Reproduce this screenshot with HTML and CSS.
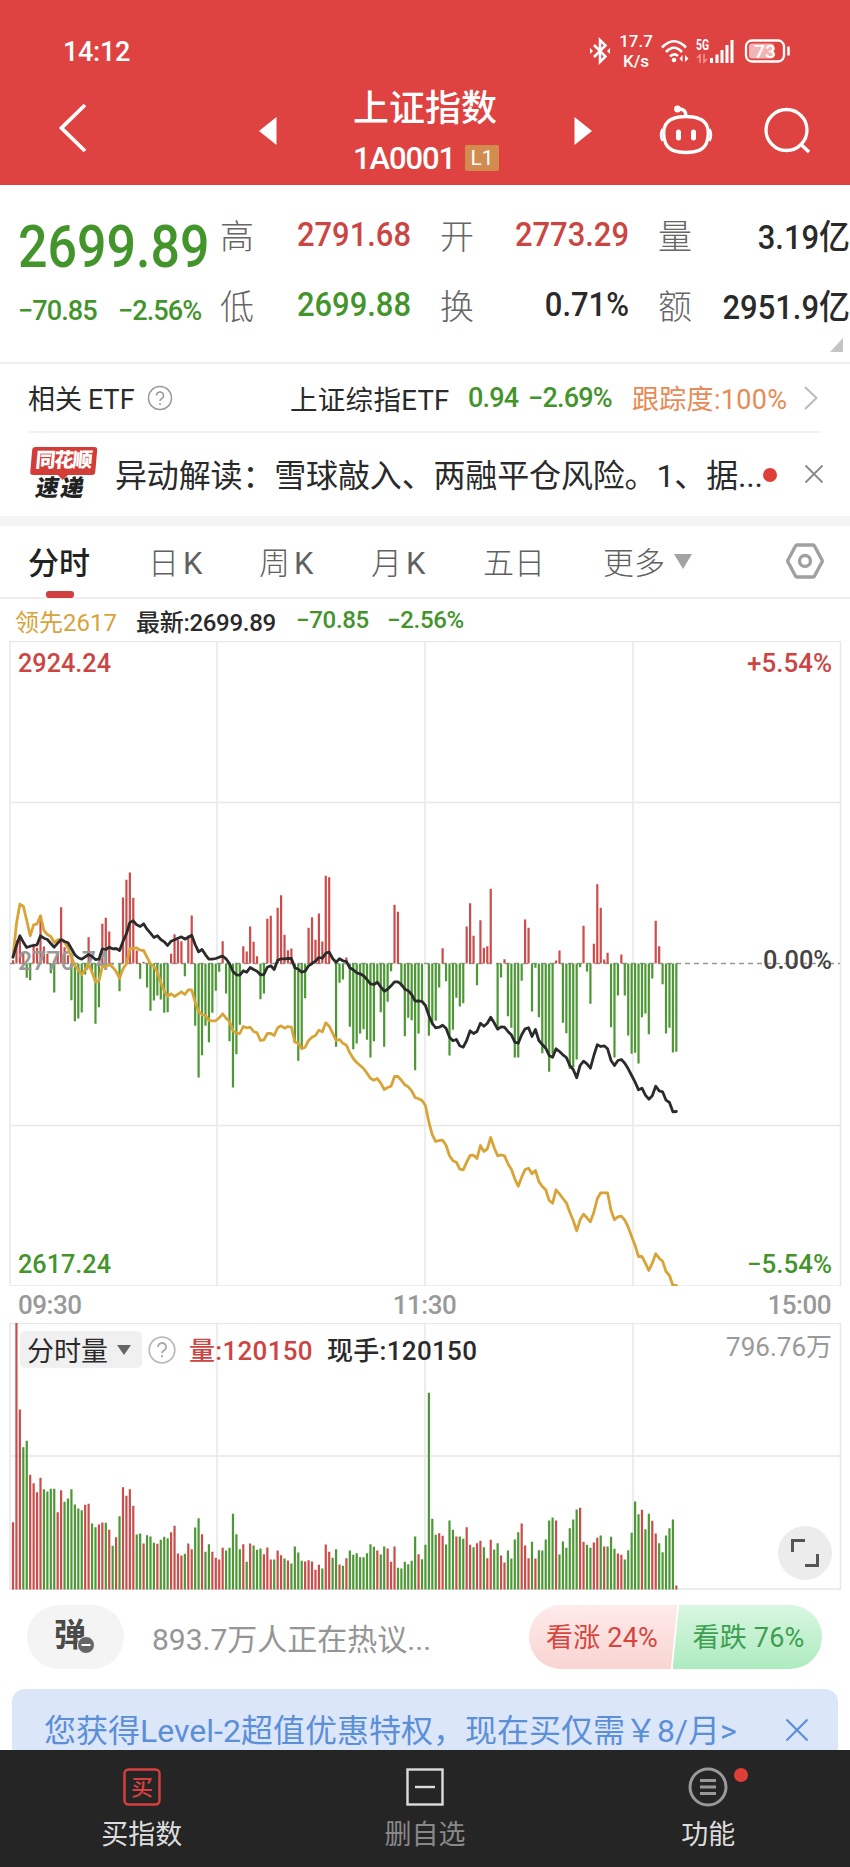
FILE: index.html
```html
<!DOCTYPE html>
<html lang="zh-CN">
<head>
<meta charset="utf-8">
<title>上证指数</title>
<link rel="stylesheet" href="styles.css">
</head>
<body>
<div class="phone">
  <header class="top">
    <div class="status">
      <span class="clock">14:12</span>
      <svg class="bt" width="22" height="28" viewBox="0 0 22 28"><path d="M5 8 16.500 19.500 11 25V3l5.500 5.500L5 20" fill="none" stroke="#fff" stroke-width="2.500"/><path d="M1 11l3 3-3 3zM21 11l-3 3 3 3z" fill="#fff"/></svg>
      <span class="speed">17.7<br>K/s</span>
      <svg width="30" height="26" viewBox="0 0 30 26"><g fill="none" stroke="#fff" stroke-width="2.600"><path d="M2 9.500Q14 -3 26 9.500M6 14Q14 5.500 22 14M10 18.500Q14 14.500 18 18"/></g><circle cx="14" cy="22" r="2.300" fill="#fff"/><path d="M22.500 17v7l-3-3.500zM25 17v7l3.500-3.500z" fill="#fff"/></svg>
      <svg class="signal" width="41" height="26" viewBox="0 0 41 26"><text x="1" y="12" class="fiveg" textLength="13" lengthAdjust="spacingAndGlyphs">5G</text><path d="M5 25v-8l-3 3M9 16v8l3-3" stroke="#f09a98" stroke-width="1.500" fill="none"/><path d="M16.500 20v5M22 16.500V25M27 12v13M32 7v18M37 2v23" stroke="#fff" stroke-width="3"/></svg>
      <svg class="battery" width="48" height="28" viewBox="0 0 48 28"><rect x="2" y="3.500" width="38" height="21" rx="6" fill="none" stroke="#fff" stroke-width="2.300"/><rect x="5" y="6.500" width="25" height="15" rx="3" fill="#f3b5b4"/><path d="M44.500 9.500v9" stroke="#fff" stroke-width="2.500"/><text x="10" y="20.500" class="charge" textLength="22" lengthAdjust="spacingAndGlyphs">73</text></svg>
    </div>
    <div class="navbar">
      <svg class="back" width="32" height="52" viewBox="0 0 32 52"><path d="M27 3 3.500 26 27 49" fill="none" stroke="#fff" stroke-width="3.800"/></svg>
      <svg class="prev" width="18" height="28" viewBox="0 0 18 28"><path d="M17.500 0v28L0 14z" fill="#fff"/></svg>
      <div class="title">
        <h1>上证指数</h1>
        <p><span>1A0001</span><b>L1</b></p>
      </div>
      <svg class="next" width="18" height="28" viewBox="0 0 18 28"><path d="M.5 0v28L18 14z" fill="#fff"/></svg>
      <svg class="robot" width="56" height="52" viewBox="0 0 56 52"><g fill="none" stroke="#fff" stroke-width="3.300"><path d="M28 12.500C18 12.500 10 15 7 22 5 26 5.500 34 7.500 39c3 7 10 9.500 20.500 9.500S45.500 46 48.500 39c2-5 2.500-13 .5-17-3-7-11-9.500-21-9.500z"/><path d="M28 12Q28 5 21 5" /><path d="M4.500 25Q1.500 31 4.500 37M51.500 25Q54.500 31 51.500 37" stroke-width="2.500"/></g><circle cx="19.500" cy="5" r="3.400" fill="#fff"/><path d="M20.500 28v6M35.500 28v6" stroke="#fff" stroke-width="5" stroke-linecap="round"/></svg>
      <svg class="search" width="50" height="50" viewBox="0 0 50 50"><circle cx="23.500" cy="24" r="20.500" fill="none" stroke="#fff" stroke-width="3.300"/><path d="M38 38.500l8 7.500" stroke="#fff" stroke-width="3.600"/></svg>
    </div>
  </header>

  <section class="quote">
    <div class="last down">
      <strong>2699.89</strong>
      <p><span>−70.85</span><span>−2.56%</span></p>
    </div>
    <dl class="stats">
      <dt>高</dt><dd class="up">2791.68</dd>
      <dt>开</dt><dd class="up">2773.29</dd>
      <dt>量</dt><dd>3.19亿</dd>
      <dt>低</dt><dd class="down">2699.88</dd>
      <dt>换</dt><dd>0.71%</dd>
      <dt>额</dt><dd>2951.9亿</dd>
    </dl>
    <svg class="corner" width="13" height="14" viewBox="0 0 13 14"><path d="M13 0v14H0z" fill="#c4c4c4"/></svg>
  </section>

  <section class="etf">
    <span>相关<i>ETF</i></span>
    <svg width="26" height="26" viewBox="0 0 26 26"><circle cx="13" cy="13" r="11.500" fill="none" stroke="#999" stroke-width="1.500"/><path d="M9.500 10.500a3.500 3.500 0 1 1 5 3.200q-1.500.8-1.500 2.300M13 18v2" fill="none" stroke="#999" stroke-width="1.500"/></svg>
    <span class="fund">上证综指ETF</span>
    <span class="down sq">0.94</span>
    <span class="down sq">−2.69%</span>
    <span class="track">跟踪度:100%</span>
    <svg width="16" height="26" viewBox="0 0 16 26"><path d="M2 2l11.500 11L2 24" fill="none" stroke="#bbb" stroke-width="2"/></svg>
  </section>

  <section class="news">
    <div class="brand"><b>同花顺</b><em>速递</em><svg width="10" height="5" viewBox="0 0 10 5"><path d="M0 0h10L5 5z" fill="#d23d38"/></svg></div>
    <p>异动解读：雪球敲入、两融平仓风险。1、据...</p>
    <i class="dot"></i>
    <svg width="20" height="20" viewBox="0 0 20 20"><path d="M1.500 1.500l17 17m0-17l-17 17" stroke="#888" stroke-width="1.800"/></svg>
  </section>

  <nav class="tabs">
    <span class="active">分时</span><span>日<i>K</i></span><span>周<i>K</i></span><span>月<i>K</i></span><span>五日</span><span>更多</span>
    <svg class="caret" width="18" height="15" viewBox="0 0 18 15"><path d="M0 0h18L9 15z" fill="#a3a3a3"/></svg>
    <svg class="gear" width="38" height="36" viewBox="0 0 38 36"><g fill="none" stroke="#a0a0a0" stroke-width="3.400"><path d="M11 2h16q1 0 1.500 1l7.500 14q.5 1 0 2l-7.500 14q-.5 1-1.500 1H11q-1 0-1.500-1L2 19q-.5-1 0-2L9.500 3q.5-1 1.500-1z"/><circle cx="19" cy="18" r="5.500"/></g></svg>
  </nav>

  <div class="legend">
    <span class="lead">领先2617</span><span>最新:2699.89</span><span class="down">−70.85</span><span class="down">−2.56%</span>
  </div>

  <svg class="chart" width="850" height="645" viewBox="0 0 850 645">
    <path class="grid" d="M10 .5H840.500V645H10zM10 161.500H840M10 484.500H840M217 0V645M425 0V645M633 0V645"/>
    <path class="zero" d="M10 322.500H840"/>
    <g id="spread"></g>
    <g class="labels">
      <text class="t-down" x="18" y="632" textLength="93" lengthAdjust="spacingAndGlyphs">2617.24</text>
      <text class="t-up" x="18" y="31" textLength="93" lengthAdjust="spacingAndGlyphs">2924.24</text>
      <text class="t-up" x="747" y="31" textLength="85" lengthAdjust="spacingAndGlyphs">+5.54%</text>
      <text class="t-down" x="747" y="632" textLength="85" lengthAdjust="spacingAndGlyphs">−5.54%</text>
      <text class="t-gray" x="18" y="329" textLength="92" lengthAdjust="spacingAndGlyphs">2770.74</text>
      <text class="t-dark" x="763" y="328" textLength="69" lengthAdjust="spacingAndGlyphs">0.00%</text>
    </g>
    <g id="lines"></g>
  </svg>

  <div class="hours"><span>09:30</span><span>11:30</span><span>15:00</span></div>

  <section class="volume">
    <svg class="chart" width="850" height="267" viewBox="0 0 850 267">
      <path class="grid" d="M10 .5H840.500V266H10zM10 133H840M217 0V266M425 0V266M633 0V266"/>
      <g id="volume"></g>
    </svg>
    <div class="tools">
      <span class="pick">分时量<svg width="14" height="10" viewBox="0 0 14 10"><path d="M0 0h14L7 10z" fill="#666"/></svg></span>
      <svg width="28" height="28" viewBox="0 0 28 28"><circle cx="14" cy="14" r="12.800" fill="none" stroke="#bbb" stroke-width="1.800"/><path d="M10 11a4 4 0 1 1 5.800 3.600q-1.800.9-1.800 2.700M14 19v2.200" fill="none" stroke="#aaa" stroke-width="1.800"/></svg>
      <span class="figure up">量:120150</span>
      <span class="figure">现手:120150</span>
      <span class="max">796.76万</span>
    </div>
    <button class="expand"><svg width="30" height="30" viewBox="0 0 30 30"><path d="M2.500 14V2.500H15M27.500 16v11.500H15" fill="none" stroke="#555" stroke-width="3"/></svg></button>
  </section>

  <section class="talk">
    <div class="danmu"><b>弹</b><svg width="18" height="18" viewBox="0 0 18 18"><circle cx="9" cy="9" r="8.500" fill="#666" stroke="#f4f4f4"/><path d="M4.500 9h9" stroke="#fff" stroke-width="2"/></svg></div>
    <span class="hint">893.7万人正在热议...</span>
    <div class="vote"><span class="bull">看涨 24%</span><span class="bear">看跌 76%</span></div>
  </section>

  <section class="promo">
    <span>您获得Level-2超值优惠特权，现在买仅需￥8/月&gt;</span>
    <svg width="24" height="24" viewBox="0 0 24 24"><path d="M1.500 1.500l21 21m0-21l-21 21" stroke="#5b8fd8" stroke-width="2.200"/></svg>
  </section>

  <footer class="bottom">
    <div><svg width="40" height="40" viewBox="0 0 40 40"><rect x="2.500" y="2.500" width="35" height="35" rx="4" fill="none" stroke="#d8403f" stroke-width="2.400"/><text x="20" y="28" class="buy">买</text></svg><span>买指数</span></div>
    <div class="muted"><svg width="40" height="40" viewBox="0 0 40 40"><rect x="2.500" y="2.500" width="35" height="35" fill="none" stroke="#ddd" stroke-width="2.400"/><path d="M10 20h20" stroke="#ddd" stroke-width="2.400"/></svg><span>删自选</span></div>
    <div><svg width="40" height="40" viewBox="0 0 40 40"><circle cx="20" cy="20" r="18" fill="none" stroke="#999" stroke-width="3"/><path d="M12 13.500h16M12 20h16M12 26.500h16" stroke="#999" stroke-width="2.800"/></svg><i class="dot"></i><span>功能</span></div>
  </footer>
</div>
<script src="chart.js"></script>
</body>
</html>
```
FILE: styles.css
```css
* { box-sizing: border-box; margin: 0; padding: 0; }
body { width: 850px; background: #fff; color: #2a2a2a; font-family: Roboto, "Noto Sans CJK SC", sans-serif; }
svg { display: block; flex: none; }
i { font-style: normal; }
.phone { width: 850px; height: 1867px; overflow: hidden; display: flex; flex-direction: column; white-space: nowrap; }
.phone > * { flex: none; }
.up { color: #cb4543; }
.down { color: #44942c; }
.dot { width: 14px; height: 14px; border-radius: 50%; background: #de3f38; }

.top { height: 185px; background: #de4341; color: #fff; }
.status { height: 78px; padding-top: 22px; display: grid; grid-template-columns: 526px 30px 41px 35px 49px 50px; align-items: center; padding-left: 63px; }
.clock { font-size: 27px; line-height: 56px; font-weight: 500; letter-spacing: -.3px; padding-top: 2px; }
.speed { font-size: 17px; line-height: 20px; text-align: center; width: 34px; font-weight: 500; }
.fiveg { font: 700 14px Roboto, sans-serif; fill: #fff; }
.charge { font: 500 18px Roboto, sans-serif; fill: #fff; }
.navbar { height: 107px; display: grid; grid-template-columns: 201px 94px 221px 84px 105px 60px; padding-left: 58px; }
.back { margin-top: 24px; }
.prev { margin: 39px 0 0; }
.title { height: 107px; }
.title h1 { font-size: 36px; line-height: 56px; font-weight: 500; padding-top: 3px; }
.title p { display: flex; align-items: center; gap: 11px; height: 46px; margin-top: -2px; }
.title p span { font-size: 31px; letter-spacing: -1.1px; width: 101px; font-weight: 500; }
.title b { width: 34px; height: 26px; border-radius: 2px; background: #d28c50; font-size: 21px; line-height: 27px; font-weight: 400; text-align: center; }
.next { margin: 39px 0 0; }
.robot { margin-top: 26px; }
.search { margin-top: 28px; }

.quote { height: 179px; border-bottom: 2px solid #eee; display: grid; grid-template-columns: 220px 630px; position: relative; }
.last { padding: 29px 0 0 18px; }
.last strong { display: block; font-size: 59px; line-height: 66px; font-weight: 500; transform: scaleX(.88); transform-origin: left; }
.last p { display: flex; font-size: 28px; line-height: 40px; margin-top: 11px; }
.last p span { width: 100px; letter-spacing: -1px; font-weight: 500; transform: scaleX(.97); transform-origin: left; }
.stats { display: grid; grid-template-columns: 36px 155px 65px 153px 66px 155px; grid-auto-rows: 70px; padding-top: 14px; align-items: center; font-size: 34px; }
.stats dt { color: #666; font-weight: 300; padding-left: 0; }
.stats dt:nth-of-type(3n+2), .stats dt:nth-of-type(3n) { padding-left: 29px; }
.stats dd { text-align: right; transform: scaleX(.91); transform-origin: right; font-weight: 500; }
.corner { position: absolute; right: 7px; bottom: 10px; }

.etf { height: 69px; margin: 0 29px; border-bottom: 2px solid #f2f2f2; display: grid; grid-template-columns: 118px 143px 178px 60px 104px 171px 20px; align-items: center; font-size: 27px; }
.etf > span:first-child { margin-left: -1px; }
.etf i { margin-left: 6px; }
.fund { font-size: 27.5px; letter-spacing: .3px; }
.sq { letter-spacing: -.8px; font-weight: 500; }
.track { color: #e88a56; letter-spacing: .3px; }

.news { height: 83px; padding-left: 29px; display: grid; grid-template-columns: 86px 648px 41px 20px; align-items: center; }
.brand { width: 66px; height: 56px; display: flex; flex-direction: column; align-items: center; transform: skewX(-5deg); position: relative; }
.brand svg { position: absolute; left: 29px; top: 28px; }
.brand b { width: 65px; height: 28px; border-radius: 3px; background: #d23d38; color: #fff; font-size: 20px; line-height: 27px; text-align: center; font-weight: 900; letter-spacing: -1.5px; }
.brand em { font-size: 23px; line-height: 28px; font-weight: 900; color: #222; letter-spacing: 2px; font-style: normal; transform: skewX(-6deg); }
.news p { font-size: 32px; line-height: 44px; letter-spacing: -.15px; padding-top: 2px; }
.news > svg { margin-top: -1px; }

.tabs { height: 83px; border-top: 10px solid #f4f4f4; border-bottom: 2px solid #eee; padding-left: 29px; display: grid; grid-template-columns: 120px 111px 112px 112px 120px 70px 112px 40px; align-items: center; color: #606060; font-size: 31px; }
.tabs span { line-height: 71px; height: 71px; margin: 2px 0 0 -1px; font-weight: 300; }
.tabs i { margin-left: 4px; font-weight: 400; }
.tabs .active { color: #222; font-weight: 500; width: 62px; position: relative; }
.active::after { content: ""; position: absolute; left: 18px; bottom: 1px; width: 28px; height: 7px; border-radius: 3px; background: #cf403e; }
.caret, .gear { margin-top: -3px; }

.legend { height: 42px; padding: 0 0 0 15px; display: grid; grid-template-columns: 121px 160px 91px 90px; align-items: center; font-size: 24px; }
.legend span { font-weight: 500; letter-spacing: -.3px; }
.legend .lead { color: #d7a33c; font-weight: 400; letter-spacing: 0; }

.grid { fill: none; stroke: #e8e8e8; stroke-width: 1.5; }
.zero { stroke: #999; stroke-width: 1.5; stroke-dasharray: 5 4; }
.labels { font: 500 26px Roboto, sans-serif; }
.t-up { fill: #cb4543; }
.t-down { fill: #44942c; }
.t-gray { fill: #999; }
.t-dark { fill: #444; }
.bar-up { stroke: #cb4c4a; stroke-width: 2.2; }
.bar-down { stroke: #4c9834; stroke-width: 2.2; }
.price, .lead-line { fill: none; stroke-width: 2.8; stroke-linejoin: round; stroke-linecap: round; }
.price { stroke: #2b2b2b; }
.lead-line { stroke: #d9a437; }

.hours { height: 37px; padding: 1px 19px 0 18px; display: flex; justify-content: space-between; align-items: center; font-size: 26px; letter-spacing: -.5px; color: #999; font-weight: 500; }
.volume { height: 267px; position: relative; font-size: 26px; }
.tools { position: absolute; left: 20px; top: 8px; height: 37px; width: 812px; display: grid; grid-template-columns: 128px 41px 138px 250px 1fr; align-items: center; }
.pick { width: 122px; height: 37px; border-radius: 5px; background: #f0f0f0; padding-left: 7px; display: flex; align-items: center; gap: 9px; font-size: 27px; }
.figure { font-weight: 500; letter-spacing: .3px; margin-top: -3px; }
.max { text-align: right; color: #999; margin-top: -11px; }
.expand { position: absolute; left: 778px; top: 203px; width: 54px; height: 54px; border: 0; border-radius: 50%; background: #ececec; display: grid; place-items: center; }

.talk { height: 99px; padding: 15px 28px 0 27px; display: grid; grid-template-columns: 125px 377px 293px; }
.danmu { width: 97px; height: 64px; border-radius: 32px; background: #f4f4f4; position: relative; color: #4a4a4a; }
.danmu b { position: absolute; left: 27px; top: 8px; font-size: 32px; line-height: 44px; font-weight: 700; }
.danmu svg { position: absolute; left: 50px; top: 31px; }
.hint { font-size: 30px; line-height: 70px; color: #959595; font-weight: 400; }
.vote { height: 64px; border-radius: 32px; overflow: hidden; display: flex; font-size: 27px; line-height: 66px; letter-spacing: .2px; }
.bull { width: 149px; padding-left: 17px; color: #d8443e; background: linear-gradient(#fdebea, #f9d5d2); clip-path: polygon(0 0, 100% 0, 95.500% 100%, 0 100%); }
.bear { width: 150px; margin-left: -5px; padding-left: 20px; color: #3f9f50; background: linear-gradient(#d8f7e1, #aeebbf); clip-path: polygon(4.500% 0, 100% 0, 100% 100%, 0 100%); }

.promo { height: 62px; margin: 0 12px; padding: 9px 0 0 32px; border-radius: 13px 13px 0 0; background: #dce6f9; color: #5b8fd8; display: grid; grid-template-columns: 741px 24px; font-size: 32px; line-height: 66px; overflow: hidden; }
.promo span { letter-spacing: 0; font-weight: 400; }
.promo svg { margin-top: 20px; }
.bottom { height: 118px; margin-top: -1px; background: #252525; color: #ddd; display: grid; grid-template-columns: repeat(3, 1fr); font-size: 27px; }
.bottom div { position: relative; display: flex; flex-direction: column; align-items: center; padding-top: 17px; gap: 8px; line-height: 40px; }
.bottom .muted { color: #888; }
.bottom .dot { position: absolute; left: 167px; top: 18px; }
.buy { font: 500 22px "Noto Sans CJK SC", sans-serif; fill: #d8403f; text-anchor: middle; }
```
FILE: chart.js
```js
// One value per trading minute, in thirds of a pixel from the axis.
const spread = [10,70,75,30,-43,-50,59,47,131,51,29,-29,-87,34,169,49,25,-110,-173,-165,-147,-33,79,-31,-181,-131,119,137,96,-3,0,-83,198,251,273,197,39,-46,5,-72,-142,-111,-96,-108,-148,-146,29,88,71,67,-38,84,144,-187,-342,-275,-187,-236,-148,-82,-25,67,-90,-233,-372,-272,-184,52,36,111,65,22,-107,-90,134,143,0,167,205,86,40,45,-237,-292,-251,-104,107,139,71,150,66,263,259,0,-250,-58,-48,18,-190,-257,-240,-210,-197,-229,-282,-233,-55,-146,-250,-115,-23,176,155,-70,-218,-163,-170,-320,-210,-115,0,-217,-185,-172,-72,46,-53,-276,-199,-103,-129,-119,111,181,83,-65,130,47,52,224,0,-190,-42,13,-158,-193,-282,-282,-52,132,107,-144,-13,-161,-269,-256,-325,-271,9,39,-178,-209,-316,-311,-288,-11,113,-24,-121,59,238,167,12,32,-191,-282,-96,27,-96,-216,-271,-268,-300,-161,-150,-212,-45,128,52,-62,-210,-193,-267,-265];
const price = [19,54,83,64,48,52,54,56,83,76,72,60,49,61,72,66,62,44,26,17,13,20,27,21,12,13,44,42,49,44,45,39,66,89,123,128,116,111,119,103,91,78,83,72,65,54,67,71,76,80,73,79,85,57,35,42,26,13,13,15,19,22,14,-1,-24,-34,-35,-22,-26,-12,-18,-23,-34,-33,-11,-7,-18,10,14,14,15,15,-13,-17,-26,-23,-7,0,7,18,16,31,34,15,4,14,8,6,-13,-19,-28,-31,-37,-48,-61,-63,-56,-70,-83,-77,-67,-55,-55,-63,-77,-82,-93,-113,-112,-114,-126,-156,-180,-193,-191,-185,-194,-221,-232,-228,-247,-251,-231,-202,-210,-204,-179,-188,-179,-161,-178,-197,-190,-191,-204,-214,-236,-239,-214,-196,-193,-219,-198,-231,-243,-254,-276,-281,-256,-264,-274,-282,-306,-318,-343,-306,-293,-301,-314,-276,-244,-249,-247,-256,-291,-306,-291,-288,-299,-316,-336,-356,-379,-374,-395,-407,-397,-368,-382,-385,-410,-417,-445,-444];
const lead = [19,119,178,172,129,83,116,119,143,99,87,81,63,71,72,64,47,19,-6,-19,-33,-19,-1,-26,-55,-53,-9,-9,-3,-11,-24,-44,-16,-1,44,46,47,40,39,19,-1,-9,-26,-56,-83,-99,-91,-99,-92,-85,-93,-79,-79,-116,-144,-153,-156,-171,-172,-172,-163,-151,-164,-174,-202,-209,-210,-189,-193,-191,-204,-208,-231,-229,-210,-210,-216,-193,-187,-194,-189,-191,-236,-239,-256,-251,-231,-221,-216,-200,-205,-178,-188,-209,-231,-228,-239,-245,-268,-285,-297,-306,-315,-329,-344,-350,-345,-359,-378,-372,-368,-339,-339,-350,-364,-370,-382,-402,-406,-411,-426,-476,-514,-534,-531,-530,-545,-577,-592,-596,-617,-619,-596,-576,-575,-585,-546,-564,-556,-522,-553,-577,-574,-577,-601,-617,-646,-668,-641,-618,-614,-631,-621,-654,-669,-679,-711,-719,-679,-691,-705,-718,-746,-771,-802,-769,-752,-763,-775,-746,-706,-688,-688,-688,-741,-769,-760,-758,-770,-791,-819,-846,-879,-879,-899,-921,-899,-871,-884,-893,-924,-936,-966,-966];
// Positive volumes are rising minutes, negative ones falling.
const volume = [202,800,540,-427,-446,344,319,292,335,-301,-294,-302,-302,232,298,-263,-273,-301,-255,-243,-238,254,257,-198,-187,195,201,-200,179,-131,157,-220,307,281,301,251,-165,-168,138,-163,-159,-140,137,-149,-158,-154,172,191,108,102,-107,138,121,-186,-214,166,-113,-136,113,95,90,125,-117,-125,-227,-166,-121,136,-83,138,-132,-119,-123,106,126,90,-90,117,103,-93,87,-78,-129,-111,-86,84,88,84,59,74,-63,135,113,-95,-121,75,-71,94,-117,-104,-109,-97,-97,-109,-136,-128,117,-105,-129,123,83,129,-65,-63,-83,-76,-86,-159,106,-91,-134,-590,-212,-164,169,161,-135,-207,-179,159,-159,-152,187,134,-127,139,146,-127,94,149,-120,-139,102,81,-117,-93,-150,-172,198,132,94,-143,93,-118,-117,-150,-207,-216,207,-105,-144,-125,-184,-210,-240,245,143,-134,-125,141,155,-162,129,-129,-158,-122,108,104,-90,-118,-170,-264,-226,239,-181,-227,206,168,-139,-112,-162,-184,-210,12];

const NS = 'http://www.w3.org/2000/svg';
const x = i => (13 + i * 3.437).toFixed(2);
function addPath(host, cls, d) {
  const p = document.createElementNS(NS, 'path');
  p.setAttribute('class', cls);
  p.setAttribute('d', d);
  document.getElementById(host).appendChild(p);
}
function bars(host, data, axis, height) {
  let up = '', down = '';
  data.forEach((v, i) => {
    if (!v) return;
    const seg = `M${x(i)} ${axis}V${(axis - height(v) / 3).toFixed(1)}`;
    if (v > 0) up += seg; else down += seg;
  });
  addPath(host, 'bar-up', up);
  addPath(host, 'bar-down', down);
}
const line = data => 'M' + data.map((v, i) => `${x(i)} ${(322.5 - v / 3).toFixed(1)}`).join('L');

bars('spread', spread, 322.5, v => v);
bars('volume', volume, 266.5, Math.abs);
addPath('lines', 'lead-line', line(lead));
addPath('lines', 'price', line(price));
```
